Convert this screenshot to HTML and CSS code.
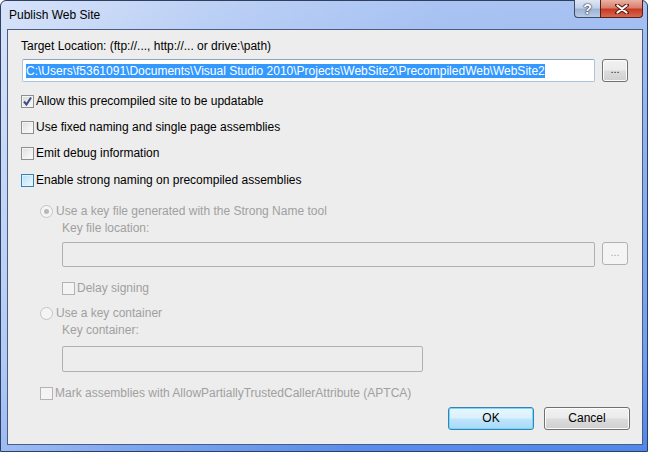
FILE: index.html
```html
<!DOCTYPE html>
<html>
<head>
<meta charset="utf-8">
<title>Publish Web Site</title>
<link rel="stylesheet" href="styles.css">
</head>
<body>
<div class="window">
  <div class="titlebar">
    <span class="title">Publish Web Site</span>
    <div class="caption-btns">
      <span class="cap help">?</span>
      <span class="cap close"><svg width="14" height="10" viewBox="0 0 14 10"><path d="M2 1 L12 9 M12 1 L2 9" stroke="#5a1a10" stroke-width="4" stroke-linecap="round"/><path d="M2.5 1.5 L11.5 8.5 M11.5 1.5 L2.5 8.5" stroke="#ffffff" stroke-width="2.2" stroke-linecap="round"/></svg></span>
    </div>
  </div>
  <div class="client">
    <div class="label">Target Location: (ftp://..., http://... or drive:\path)</div>
    <div class="field-row path-row">
      <div class="textbox focused path"><span class="sel">C:\Users\f5361091\Documents\Visual Studio 2010\Projects\WebSite2\PrecompiledWeb\WebSite2</span></div>
      <div class="browse">...</div>
    </div>

    <div class="check first"><span class="cb checked"><svg width="11" height="11" viewBox="0 0 11 11"><path d="M2 5.5 L4.5 8.5 L9 1.5" fill="none" stroke="#3d4f86" stroke-width="2"/></svg></span>Allow this precompiled site to be updatable</div>
    <div class="check"><span class="cb"></span>Use fixed naming and single page assemblies</div>
    <div class="check"><span class="cb"></span>Emit debug information</div>
    <div class="check strong"><span class="cb hover"></span>Enable strong naming on precompiled assemblies</div>

    <div class="sub">
      <div class="radio-row r1 disabled"><span class="rb on"></span>Use a key file generated with the Strong Name tool</div>
      <div class="inner">
        <div class="sublabel disabled">Key file location:</div>
        <div class="field-row keyfile-row">
          <div class="textbox dis keyfile"></div>
          <div class="browse dis">...</div>
        </div>
        <div class="check delay disabled"><span class="cb dis"></span>Delay signing</div>
      </div>
      <div class="radio-row r2 disabled"><span class="rb"></span>Use a key container</div>
      <div class="inner">
        <div class="sublabel disabled">Key container:</div>
        <div class="textbox dis container"></div>
      </div>
      <div class="check aptca disabled"><span class="cb dis"></span>Mark assemblies with AllowPartiallyTrustedCallerAttribute (APTCA)</div>
    </div>

    <div class="buttons">
      <div class="btn default">OK</div>
      <div class="btn">Cancel</div>
    </div>
  </div>
</div>
</body>
</html>
```

FILE: styles.css
```css
html, body {
  margin: 0;
  padding: 0;
  background: #ffffff;
}
body {
  font-family: "Liberation Sans", Arial, sans-serif;
  font-size: 12px;
  color: #000;
}
.window {
  box-sizing: border-box;
  width: 648px;
  height: 452px;
  border: 1px solid #2f3f5f;
  border-radius: 6px 6px 0 0;
  padding: 0 4px 6px 6px;
  display: flex;
  flex-direction: column;
  background:
    linear-gradient(100deg, rgba(255,255,255,0.55) 0%, rgba(255,255,255,0.25) 30%, rgba(255,255,255,0.05) 60%, rgba(255,255,255,0) 100%),
    linear-gradient(180deg, #a6c1f2 0%, #8fb2f0 30%, #6e9ef0 80%, #4f86ea 100%);
}
.titlebar {
  height: 28px;
  display: flex;
  align-items: flex-start;
}
.title {
  flex: 1;
  padding: 7px 0 0 2px;
  line-height: 15px;
  color: #000;
}
.caption-btns {
  display: flex;
  margin-top: -1px;
}
.cap {
  box-sizing: border-box;
  height: 18px;
  display: flex;
  align-items: center;
  justify-content: center;
  border: 1px solid #3c4a66;
  border-top: none;
}
.help {
  width: 26px;
  border-right: none;
  border-radius: 0 0 0 4px;
  background: linear-gradient(180deg, #dfe7f4 0%, #c3d1e6 45%, #9fb4d4 55%, #b9cbe6 100%);
  color: #fff;
  font-weight: bold;
  font-size: 14px;
  text-shadow: 0 0 1px #2d3a55, 0 0 1px #2d3a55, 0 0 2px #2d3a55;
}
.close {
  width: 43px;
  border-radius: 0 0 4px 0;
  border-color: #5a1e16;
  background: linear-gradient(180deg, #eab2a4 0%, #d9806c 45%, #c83a22 55%, #d56a50 100%);
}
.client {
  flex: 1;
  border: 1px solid #4a5c80;
  background: #ededed;
  padding: 9px 12px 0 13px;
  display: flex;
  flex-direction: column;
}
.label {
  line-height: 15px;
}
.field-row {
  display: flex;
  align-items: flex-start;
  gap: 7px;
}
.path-row {
  margin: 5px 0 0 1px;
}
.textbox {
  box-sizing: border-box;
  background: #fff;
  border: 1px solid #a9c4dc;
  border-top-color: #8aa6c0;
  border-radius: 2px;
}
.textbox.path {
  width: 573px;
  height: 23px;
  padding: 0 3px;
  display: flex;
  align-items: center;
}
.sel {
  background: #3399ff;
  color: #fff;
  line-height: 14px;
  white-space: nowrap;
}
.browse {
  box-sizing: border-box;
  width: 26px;
  height: 23px;
  border: 1px solid #707070;
  border-radius: 3px;
  background: linear-gradient(180deg, #f2f2f2 0%, #ebebeb 48%, #dddddd 52%, #cfcfcf 100%);
  box-shadow: inset 0 0 0 1px #fcfcfc;
  display: flex;
  align-items: center;
  justify-content: center;
  font-size: 11px;
  line-height: 11px;
  color: #222;
  padding-bottom: 2px;
}
.browse.dis {
  border-color: #adb2b5;
  background: #f4f4f4;
  box-shadow: none;
  color: #a8a8a8;
}
.check, .radio-row {
  display: flex;
  align-items: center;
  line-height: 15px;
  height: 15px;
  margin-top: 11px;
  white-space: nowrap;
}
.check.first {
  margin-top: 12px;
}
.check.strong {
  margin-top: 12px;
}
.cb {
  box-sizing: border-box;
  width: 13px;
  height: 13px;
  border: 1px solid #8e8f8f;
  background: linear-gradient(135deg, #dcdcdc 0%, #f2f2f2 60%, #fbfbfb 100%);
  box-shadow: inset 0 0 0 1px #f4f4f4;
  margin-right: 2px;
  display: flex;
  align-items: center;
  justify-content: center;
}
.cb.checked {
  background: linear-gradient(135deg, #d6d6d6 0%, #eeeeee 60%, #fafafa 100%);
}
.cb.hover {
  border-color: #3c7fb1;
  background: linear-gradient(135deg, #b1dff9 0%, #d7effc 60%, #edf8fe 100%);
  box-shadow: inset 0 0 0 1px #def3fc;
}
.cb.dis {
  border-color: #b4b4b4;
  background: #f4f4f4;
  box-shadow: none;
}
.disabled {
  color: #a0a0a0;
}
.sub {
  padding-left: 19px;
  display: flex;
  flex-direction: column;
}
.radio-row.r1 {
  margin-top: 16px;
}
.radio-row.r2 {
  margin-top: 10px;
}
.rb {
  box-sizing: border-box;
  width: 13px;
  height: 13px;
  border: 1px solid #c4c4c4;
  border-radius: 50%;
  background: #f4f4f4;
  margin-right: 3px;
  display: flex;
  align-items: center;
  justify-content: center;
}
.rb.on::after {
  content: "";
  width: 5px;
  height: 5px;
  border-radius: 50%;
  background: #b8b8b8;
}
.inner {
  padding-left: 22px;
  display: flex;
  flex-direction: column;
}
.sublabel {
  line-height: 15px;
  margin-top: 2px;
}
.keyfile-row {
  margin-top: 6px;
}
.textbox.dis {
  background: transparent;
  border-color: #b1b1b1;
  border-radius: 2px;
}
.textbox.keyfile {
  width: 533px;
  height: 25px;
}
.check.delay {
  margin-top: 14px;
}
.textbox.container {
  width: 361px;
  height: 26px;
  margin-top: 8px;
}
.check.aptca {
  margin-top: 14px;
}
.buttons {
  display: flex;
  justify-content: flex-end;
  gap: 10px;
  margin-top: 6px;
}
.btn {
  box-sizing: border-box;
  width: 86px;
  height: 23px;
  border: 1px solid #707070;
  border-radius: 3px;
  background: linear-gradient(180deg, #f2f2f2 0%, #ebebeb 48%, #dddddd 52%, #cfcfcf 100%);
  box-shadow: inset 0 0 0 1px #fcfcfc;
  display: flex;
  align-items: center;
  justify-content: center;
  line-height: 15px;
}
.btn.default {
  border-color: #3c7fb1;
  background: linear-gradient(180deg, #eaf6fd 0%, #d9f0fc 48%, #bee6fd 52%, #a7d9f5 100%);
  box-shadow: inset 0 0 0 1px #6fdbff;
}
```
